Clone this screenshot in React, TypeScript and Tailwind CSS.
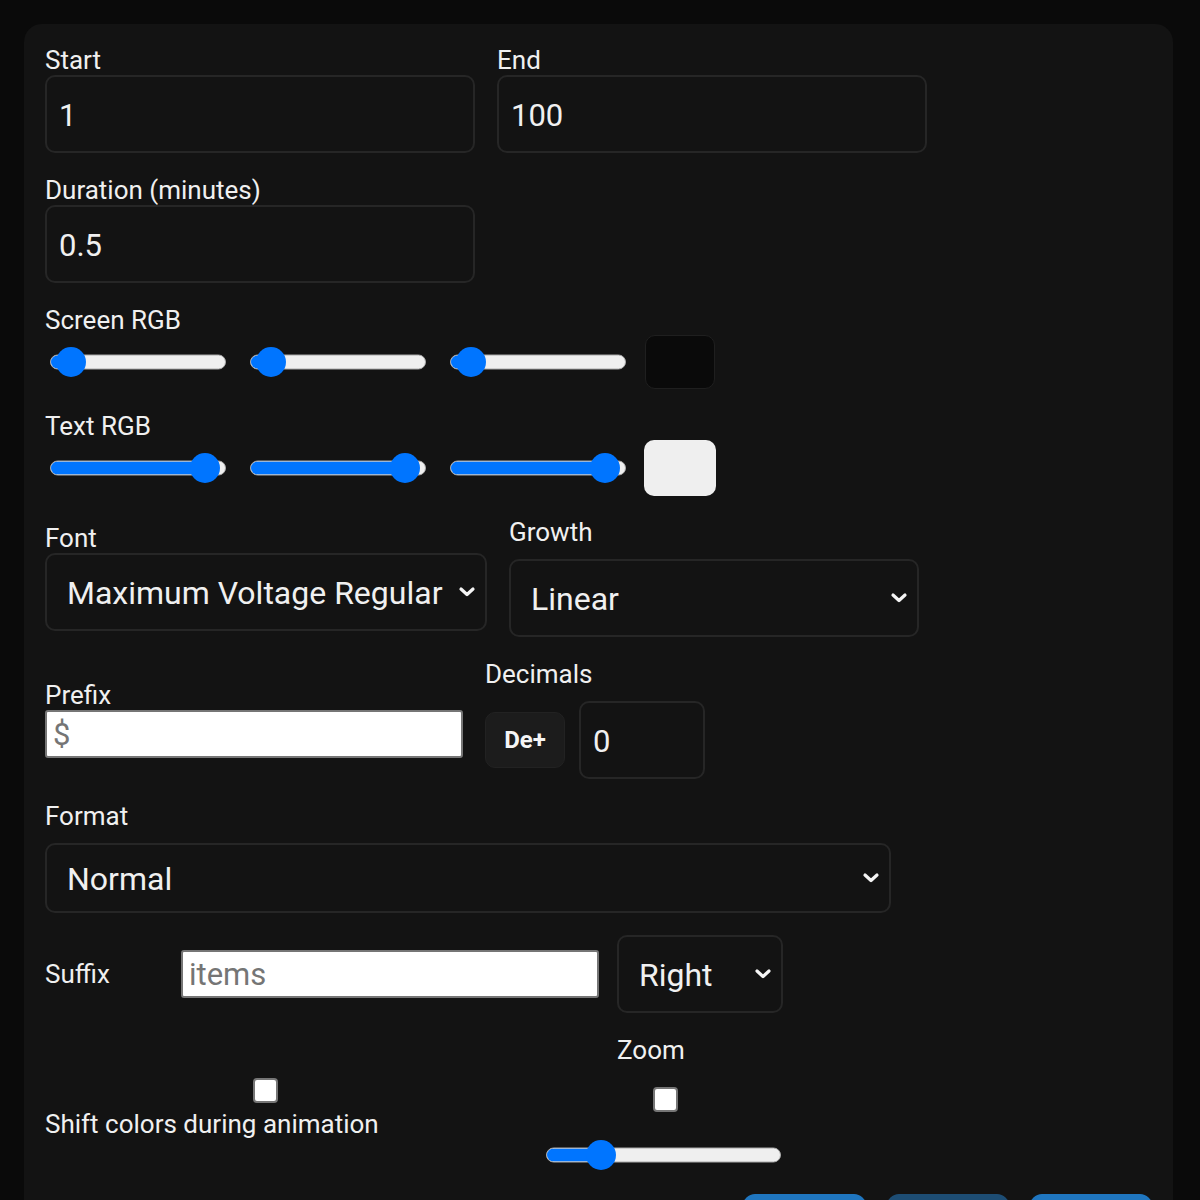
import React from "react";

function Chevron() {
  return (
    <svg
      width="18"
      height="12"
      viewBox="0 0 18 12"
      fill="none"
      className="pointer-events-none absolute right-[9px] top-1/2 -translate-y-1/2"
    >
      <path d="M3 3l6 5.5L15 3" stroke="#f5f5f5" strokeWidth="3.2" strokeLinecap="round" strokeLinejoin="round" />
    </svg>
  );
}

function Slider({ className, value, px }: { className: string; value: number; px: number }) {
  // px = track width, value = 0..1
  const r = 15;
  const center = r + value * (px - 2 * r);
  return (
    <div className={"relative h-[30px] shrink-0 " + className}>
      <div className="absolute inset-x-0 top-1/2 h-[15px] -translate-y-1/2 overflow-hidden rounded-full border border-[#a9a9a9] bg-[#efefef]">
        <div className="h-full bg-[#0075ff]" style={{ width: center }} />
      </div>
      <div className="absolute top-0 h-[30px] w-[30px] rounded-full bg-[#0075ff]" style={{ left: center - r }} />
    </div>
  );
}

function Label({ children, className = "" }: { children: React.ReactNode; className?: string }) {
  return <div className={"h-[28px] text-[26px] leading-[30px] text-[#f0f0f0] " + className}>{children}</div>;
}

function DarkInput({ value, className }: { value: string; className: string }) {
  return (
    <div
      className={
        "flex h-[78px] items-center rounded-[10px] border-2 border-[#262626] bg-[#131313] px-[12px] pt-[4px] text-[31px] text-[#f0f0f0] " +
        className
      }
    >
      {value}
    </div>
  );
}

function DarkSelect({ value, className }: { value: string; className: string }) {
  return (
    <div
      className={
        "relative flex items-center rounded-[10px] border-2 border-[#262626] bg-[#131313] pl-[20px] pt-[2px] text-[32px] text-[#f0f0f0] " +
        className
      }
    >
      {value}
      <Chevron />
    </div>
  );
}

function Checkbox() {
  return <div className="h-[25px] w-[25px] rounded-[4px] border-2 border-[#767676] bg-white" />;
}

export default function App() {
  const rgb = (v: number) => v / 255;
  return (
    <div className="min-h-screen bg-[#0a0a0a] pl-6 pr-[27px] pt-6 font-['Roboto',sans-serif]">
      <div className="flex flex-col rounded-t-[18px] bg-[#131313] pb-10 pl-[21px] pr-[21px] pt-[21px]">
        {/* Start / End */}
        <div className="flex gap-[22px]">
          <div className="flex flex-col gap-[2px]">
            <Label>Start</Label>
            <DarkInput value="1" className="w-[430px]" />
          </div>
          <div className="flex flex-col gap-[2px]">
            <Label>End</Label>
            <DarkInput value="100" className="w-[430px]" />
          </div>
        </div>

        {/* Duration */}
        <div className="mt-[22px] flex flex-col gap-[2px]">
          <Label>Duration (minutes)</Label>
          <DarkInput value="0.5" className="w-[430px]" />
        </div>

        {/* Screen RGB */}
        <div className="mt-[22px] flex flex-col gap-[2px]">
          <Label>Screen RGB</Label>
          <div className="flex h-[54px] items-center">
            <Slider className="ml-[5px] w-[176px]" px={176} value={rgb(10)} />
            <Slider className="ml-[24px] w-[176px]" px={176} value={rgb(10)} />
            <Slider className="ml-[24px] w-[176px]" px={176} value={rgb(10)} />
            <div className="ml-[19px] h-[54px] w-[70px] rounded-[10px] border border-[#1f1f1f] bg-[#0a0a0a]" />
          </div>
        </div>

        {/* Text RGB */}
        <div className="mt-[22px] flex flex-col gap-[2px]">
          <Label>Text RGB</Label>
          <div className="flex h-[54px] items-center">
            <Slider className="ml-[5px] w-[176px]" px={176} value={rgb(244)} />
            <Slider className="ml-[24px] w-[176px]" px={176} value={rgb(244)} />
            <Slider className="ml-[24px] w-[176px]" px={176} value={rgb(244)} />
            <div className="ml-[18px] h-[56px] w-[72px] rounded-[10px] bg-[#efefef]" />
          </div>
        </div>

        {/* Font / Growth */}
        <div className="mt-[22px] flex items-center gap-[22px]">
          <div className="flex flex-col gap-[2px]">
            <Label>Font</Label>
            <DarkSelect value="Maximum Voltage Regular" className="h-[78px] w-[442px]" />
          </div>
          <div className="flex flex-col gap-[14px]">
            <Label>Growth</Label>
            <DarkSelect value="Linear" className="h-[78px] w-[410px]" />
          </div>
        </div>

        {/* Prefix / Decimals */}
        <div className="mt-[22px] flex items-center gap-[22px]">
          <div className="flex flex-col gap-[2px]">
            <Label>Prefix</Label>
            <div className="flex h-[48px] w-[418px] items-center rounded-[3px] border-2 border-[#767676] bg-white px-[6px] pt-[3px] text-[31px] text-[#757575]">
              $
            </div>
          </div>
          <div className="flex flex-col gap-[14px]">
            <Label>Decimals</Label>
            <div className="flex items-center gap-[14px]">
              <button className="flex h-[56px] w-[80px] items-center justify-center rounded-[10px] border border-[#222222] bg-[#1c1c1c] text-[24px] font-bold text-[#f5f5f5]">
                De+
              </button>
              <DarkInput value="0" className="w-[126px]" />
            </div>
          </div>
        </div>

        {/* Format */}
        <div className="mt-[22px] flex flex-col gap-[14px]">
          <Label>Format</Label>
          <DarkSelect value="Normal" className="h-[70px] w-[846px]" />
        </div>

        {/* Suffix */}
        <div className="mt-[22px] flex h-[78px] items-center">
          <div className="w-[118px] text-[26px] leading-[28px] text-[#f0f0f0]">Suffix</div>
          <div className="ml-[18px] flex h-[48px] w-[418px] items-center rounded-[3px] border-2 border-[#767676] bg-white px-[6px] pt-[3px] text-[31px] text-[#757575]">
            items
          </div>
          <DarkSelect value="Right" className="ml-[18px] h-[78px] w-[166px]" />
        </div>

        {/* Shift colors / Zoom */}
        <div className="mt-[22px] flex items-center">
          <div className="flex w-[501px] flex-col pt-[10px]">
            <div className="ml-[208px]">
              <Checkbox />
            </div>
            <div className="mt-[7px] text-[26px] leading-[28px] text-[#f0f0f0]">Shift colors during animation</div>
          </div>
          <div className="flex w-[235px] flex-col">
            <Label className="ml-[71px]">Zoom</Label>
            <div className="ml-[107px] mt-[24px]">
              <Checkbox />
            </div>
            <Slider className="mt-[28px] w-[235px]" px={235} value={0.195} />
          </div>
        </div>

        {/* Buttons */}
        <div className="mt-[24px] flex justify-end gap-[21px]">
          <button className="h-[52px] w-[123px] rounded-[12px] bg-[#1f76c0]" />
          <button className="h-[52px] w-[122px] rounded-[12px] bg-[#1d4d74]" />
          <button className="h-[52px] w-[122px] rounded-[12px] bg-[#1f76c0]" />
        </div>
      </div>
    </div>
  );
}
